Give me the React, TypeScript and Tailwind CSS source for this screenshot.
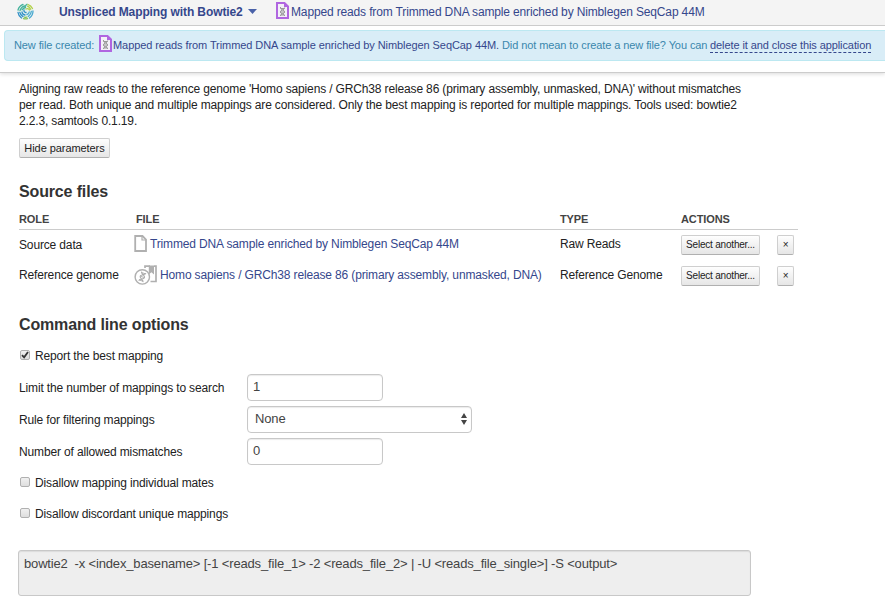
import React from "react";

function DnaFile() {
  return (
    <svg width="13" height="17" viewBox="0 0 13 17" className="shrink-0" fill="none">
      <path d="M1 1H8.5L12 4.5V16H1Z" fill="#f3f1f8" stroke="#b066e0" strokeWidth="2" />
      <path d="M8 1V5H12Z" fill="#b066e0" />
      <path d="M4.3 5C4.3 8.5 8.7 7.5 8.7 10C8.7 12 4.3 11.5 4.3 14M8.7 5.5C8.7 8.5 4.3 7.5 4.3 10C4.3 12 8.7 11.5 8.7 14M4.5 6.5H8.5M4.5 10H8.5M4.5 13H8.5" stroke="#999" strokeWidth="1" />
    </svg>
  );
}

function PlainFile() {
  return (
    <svg width="13" height="17" viewBox="0 0 13 17" className="shrink-0" fill="none">
      <path d="M1.2 1H8.5L12 4.5V16H1.2Z" fill="#fff" stroke="#b0b0b0" strokeWidth="1.8" />
      <path d="M8 1V5H12" stroke="#b0b0b0" strokeWidth="1.2" />
    </svg>
  );
}

function GenomeIcon() {
  return (
    <svg width="23" height="20" viewBox="0 0 23 20" className="shrink-0" fill="none">
      <path d="M11 3V1.2H16M20 1.2H22V16.5H16.5" stroke="#b0b0b0" strokeWidth="1.7" />
      <path d="M14.8 .4H20V9.5L17.4 7.3L14.8 9.5Z" fill="#b0b0b0" />
      <circle cx="8.3" cy="11.9" r="7.2" fill="#fff" stroke="#b0b0b0" strokeWidth="1.4" />
      <g transform="rotate(18 8.3 11.9)" stroke="#a8a8a8">
        <path d="M6 7.2C6 9.8 10.6 9.4 10.6 11.9C10.6 14.4 6 14 6 16.6M10.6 7.2C10.6 9.8 6 9.4 6 11.9C6 14.4 10.6 14 10.6 16.6" strokeWidth="1" />
        <path d="M6.2 8H10.4M6.2 11.9H10.4M6.2 15.8H10.4" strokeWidth="0.8" />
      </g>
    </svg>
  );
}

function Globe() {
  return (
    <svg width="17" height="17" viewBox="0 0 17 17" className="shrink-0" fill="none" strokeLinecap="round">
      <circle cx="8.5" cy="8.5" r="7.6" fill="#e3f1ee" />
      <path d="M6 1.4Q2 3 1 7M7.5 2.8Q4 4 3 7.5M5.2 6.8Q6 5 8.5 4.5M10 1.2Q8.5 2 8 4" stroke="#45b29b" strokeWidth="1.3" />
      <path d="M11 1.5Q14 2.5 15.5 5.5M10.5 3.2Q12.5 4 13.6 6.2M9 6Q11.5 5 12.5 7" stroke="#b3cf45" strokeWidth="1.3" />
      <path d="M1 9.5Q1.5 13 4.5 15M2.8 9.3Q3.5 12 6 13.6M5 9Q5.2 11.5 8 12M7 7Q6.5 9 9 9.5" stroke="#2f8fc6" strokeWidth="1.3" />
      <path d="M16 8Q16 12.5 12.5 15M14.3 8.5Q14 11.5 11.5 13.3M12.2 9Q12 11 10 11.5" stroke="#4aa8d0" strokeWidth="1.3" />
      <path d="M6.5 15.6Q8.5 16.3 10.5 15.6M7.5 14.2Q9 14.6 10 14" stroke="#86bf56" strokeWidth="1.2" />
    </svg>
  );
}

function Button({ children, className }: { children: React.ReactNode; className: string }) {
  return (
    <button className={`flex h-5 items-center justify-center whitespace-nowrap rounded-[2px] border border-[#cfcfcf] border-b-[#b0b0b0] bg-linear-to-b from-[#fefefe] to-[#e6e6e6] text-[#222] ${className}`}>
      {children}
    </button>
  );
}

function Check({ label, checked, className }: { label: string; checked?: boolean; className: string }) {
  return (
    <label className={`flex items-center ${className}`}>
      <span className="mb-[2px] ml-px mr-[5px] flex size-[10px] items-center justify-center rounded-[2px] border border-[#b0b0b0] bg-linear-to-b from-[#f0f0f0] to-[#dedede]">
        {checked && (
          <svg width="8" height="8" viewBox="0 0 8 8" className="shrink-0" fill="none">
            <path d="M1 4.2L3.1 6.4L7 1" stroke="#333" strokeWidth="1.8" />
          </svg>
        )}
      </span>
      <span>{label}</span>
    </label>
  );
}

function Field({ label, children }: { label: string; children: React.ReactNode }) {
  return (
    <div className="flex h-8 items-center">
      <span className="w-[228px] shrink-0">{label}</span>
      {children}
    </div>
  );
}

const inputStyle = "mb-px flex h-[27px] items-center rounded-[4px] border border-[#c8c8c8] bg-white pb-px text-[13px] text-[#444] shadow-[inset_0_1px_1px_rgba(0,0,0,0.08)]";

function SourceRow({ role, roleClass, icon, file, type }: { role: string; roleClass: string; icon: React.ReactNode; file: string; type: string }) {
  return (
    <div className="flex h-[31px] items-center">
      <span className={`w-[115px] ${roleClass}`}>{role}</span>
      <span className="flex w-[426px] items-center gap-[3px] pb-[2px] text-[#35478c]">
        {icon}
        <span>{file}</span>
      </span>
      <span className="w-[121px] pb-[2px]">{type}</span>
      <Button className="w-[79px] text-[10px] tracking-[-0.2px]">Select another...</Button>
      <Button className="ml-[17px] w-[17px] text-[10px]">×</Button>
    </div>
  );
}

export default function App() {
  return (
    <div className="h-[614px] w-[885px] overflow-hidden whitespace-nowrap bg-white font-['Liberation_Sans',Arial,sans-serif] text-[12px] leading-4 tracking-[-0.145px] text-[#222]">
      <header className="border-b border-[#ccc] shadow-[0_1px_4px_rgba(0,0,0,0.15)]">
        <div className="flex h-[26px] items-center border-b border-[#ccc] bg-[#f4f4f4] pb-[2px] pl-[17px] text-[#35478c]">
          <Globe />
          <span className="ml-[25px] w-[184px] text-[12px] font-bold tracking-[-0.1px]">Unspliced Mapping with Bowtie2</span>
          <svg width="9" height="5" viewBox="0 0 9 5" className="ml-[5px]"><path d="M0 0H9L4.5 5Z" fill="#4961a8" /></svg>
          <span className="mb-[2px] ml-[19px] mr-[2px]"><DnaFile /></span>
          <span>Mapped reads from Trimmed DNA sample enriched by Nimblegen SeqCap 44M</span>
        </div>
        <div className="ml-1 mt-1 flex h-[31px] items-center rounded-l-[4px] border border-r-0 border-[#bce8f1] bg-[#d9edf7] pb-[2px] pl-[9px] text-[11px] text-[#3a87ad]">
          <span className="w-[85px] tracking-[-0.1px]">New file created:</span>
          <span className="mb-[3px]"><DnaFile /></span>
          <span className="ml-px w-[389px] tracking-[-0.075px] text-[#35478c]">Mapped reads from Trimmed DNA sample enriched by Nimblegen SeqCap 44M.</span>
          <span className="w-[208px] tracking-[-0.09px]">Did not mean to create a new file? You can</span>
          <span className="mt-[2px] border-b border-dashed border-[#35478c] leading-[13px] tracking-[-0.09px] text-[#35478c]">delete it and close this application</span>
        </div>
        <div className="h-[11px]" />
      </header>
      <main className="pl-[19px] pt-2">
        <p>
          Aligning raw reads to the reference genome 'Homo sapiens / GRCh38 release 86 (primary assembly, unmasked, DNA)' without mismatches<br />
          per read. Both unique and multiple mappings are considered. Only the best mapping is reported for multiple mappings. Tools used: bowtie2<br />
          2.2.3, samtools 0.1.19.
        </p>
        <Button className="mt-[9px] w-[91px] text-[11px] tracking-[-0.07px]">Hide parameters</Button>
        <h2 className="mt-[24px] text-[16px] font-bold leading-5 text-[#333]">Source files</h2>
        <section className="w-[779px]">
          <div className="mt-[9px] flex h-[19px] border-b border-[#ccc] text-[11px] font-bold tracking-[-0.1px] text-[#444]">
            <span className="w-[117px]">ROLE</span>
            <span className="w-[424px]">FILE</span>
            <span className="w-[121px]">TYPE</span>
            <span>ACTIONS</span>
          </div>
          <div className="-mt-px">
            <SourceRow role="Source data" roleClass="" icon={<PlainFile />} file="Trimmed DNA sample enriched by Nimblegen SeqCap 44M" type="Raw Reads" />
            <SourceRow role="Reference genome" roleClass="pb-[2px]" icon={<GenomeIcon />} file="Homo sapiens / GRCh38 release 86 (primary assembly, unmasked, DNA)" type="Reference Genome" />
          </div>
        </section>
        <h2 className="mt-[24px] text-[16px] font-bold leading-5 text-[#333]">Command line options</h2>
        <Check className="mt-[13px]" checked label="Report the best mapping" />
        <div className="mt-[8px]">
          <Field label="Limit the number of mappings to search"><div className={`${inputStyle} w-[136px] pl-[5px]`}>1</div></Field>
          <Field label="Rule for filtering mappings">
            <div className={`${inputStyle} w-[225px] justify-between pl-[7px] pr-1`}>
              None
              <svg width="6" height="12" viewBox="0 0 6 12" fill="#444"><path d="M0 5L3 0L6 5ZM0 7H6L3 12Z" /></svg>
            </div>
          </Field>
          <Field label="Number of allowed mismatches"><div className={`${inputStyle} w-[136px] pl-[5px]`}>0</div></Field>
        </div>
        <Check className="mt-[7px]" label="Disallow mapping individual mates" />
        <Check className="mt-[15px]" label="Disallow discordant unique mappings" />
        <div className="-ml-px mt-[28px] h-[46px] w-[733px] whitespace-pre rounded-[3px] border border-[#c8c8c8] bg-[#eee] pl-[5px] pt-[5px] text-[13px] tracking-[-0.16px] text-[#444] shadow-[inset_0_1px_1px_rgba(0,0,0,0.08)]">{"bowtie2  -x <index_basename> [-1 <reads_file_1> -2 <reads_file_2> | -U <reads_file_single>] -S <output>"}</div>
      </main>
    </div>
  );
}
